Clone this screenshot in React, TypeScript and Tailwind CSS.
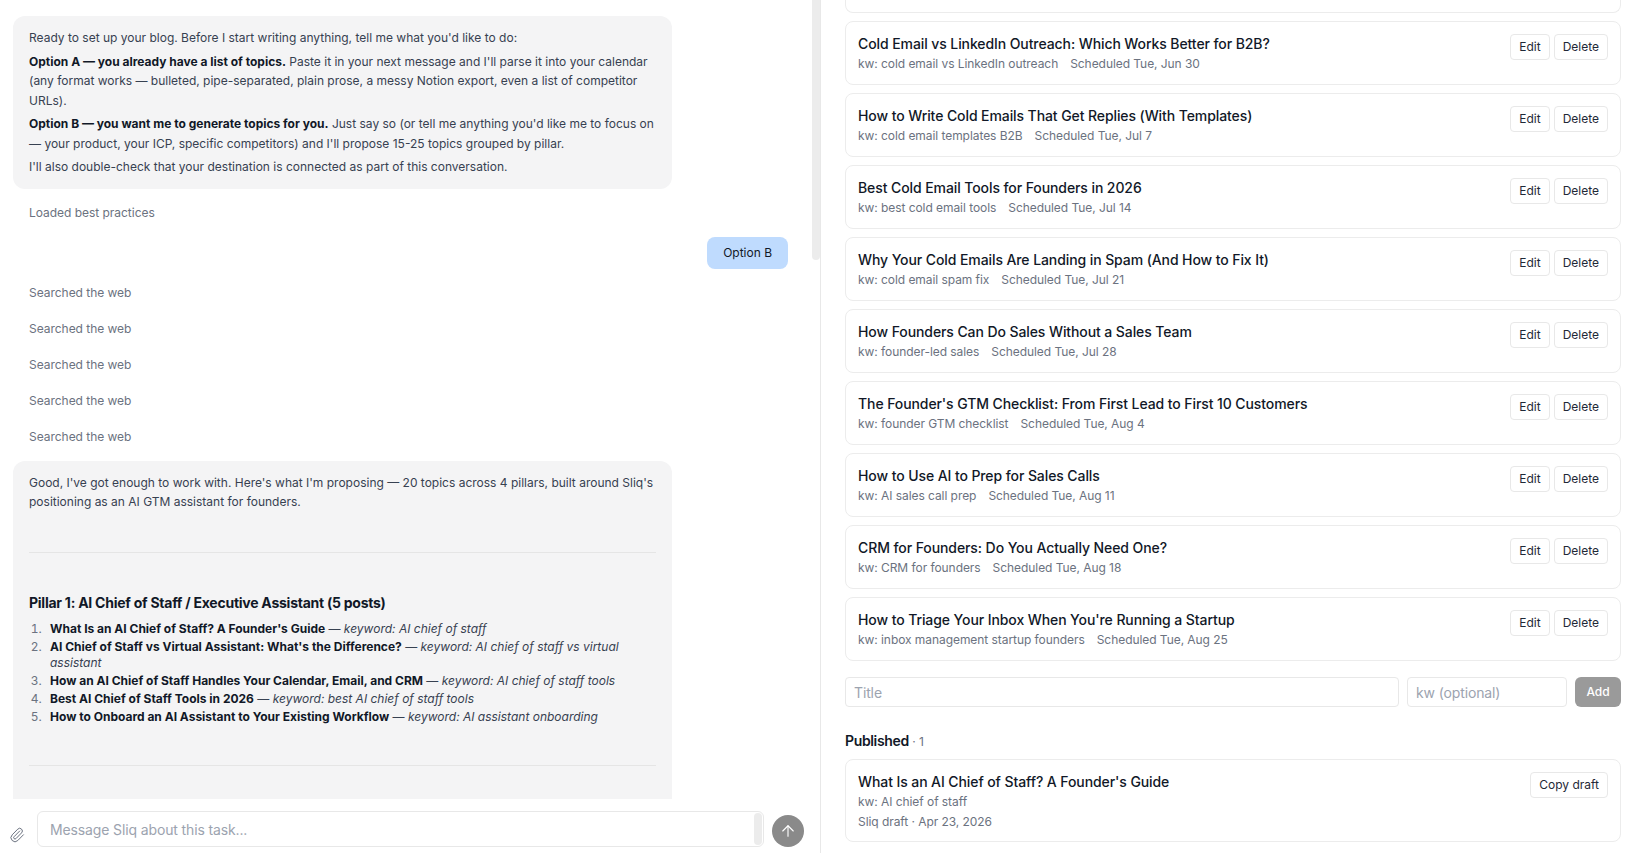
import { ArrowUp, Paperclip } from "lucide-react";

type Post = { title: string; kw: string; date: string };

const POSTS: Post[] = [
  { title: "Cold Email vs LinkedIn Outreach: Which Works Better for B2B?", kw: "cold email vs LinkedIn outreach", date: "Tue, Jun 30" },
  { title: "How to Write Cold Emails That Get Replies (With Templates)", kw: "cold email templates B2B", date: "Tue, Jul 7" },
  { title: "Best Cold Email Tools for Founders in 2026", kw: "best cold email tools", date: "Tue, Jul 14" },
  { title: "Why Your Cold Emails Are Landing in Spam (And How to Fix It)", kw: "cold email spam fix", date: "Tue, Jul 21" },
  { title: "How Founders Can Do Sales Without a Sales Team", kw: "founder-led sales", date: "Tue, Jul 28" },
  { title: "The Founder's GTM Checklist: From First Lead to First 10 Customers", kw: "founder GTM checklist", date: "Tue, Aug 4" },
  { title: "How to Use AI to Prep for Sales Calls", kw: "AI sales call prep", date: "Tue, Aug 11" },
  { title: "CRM for Founders: Do You Actually Need One?", kw: "CRM for founders", date: "Tue, Aug 18" },
  { title: "How to Triage Your Inbox When You're Running a Startup", kw: "inbox management startup founders", date: "Tue, Aug 25" },
];

const PILLAR_ONE = [
  { title: "What Is an AI Chief of Staff? A Founder's Guide", kw: "AI chief of staff" },
  { title: "AI Chief of Staff vs Virtual Assistant: What's the Difference?", kw: "AI chief of staff vs virtual assistant" },
  { title: "How an AI Chief of Staff Handles Your Calendar, Email, and CRM", kw: "AI chief of staff tools" },
  { title: "Best AI Chief of Staff Tools in 2026", kw: "best AI chief of staff tools" },
  { title: "How to Onboard an AI Assistant to Your Existing Workflow", kw: "AI assistant onboarding" },
];

function SmallButton({ children }: { children: React.ReactNode }) {
  return (
    <button className="h-[26px] rounded border border-[#e8e8e8] bg-white px-2 text-xs text-[#1f2937]">
      {children}
    </button>
  );
}

function ToolLine({ children, className = "" }: { children: React.ReactNode; className?: string }) {
  return <div className={`px-4 text-xs leading-[22px] tracking-[-0.03px] text-[#6b7280] ${className}`}>{children}</div>;
}

function Chat() {
  return (
    <div className="relative flex h-full w-[821px] shrink-0 flex-col border-r border-[#e8e8e8]">
      <div className="absolute top-0 right-0 h-[260px] w-2 rounded-b-md bg-[#ececec]" />

      {/* Messages */}
      <div className="min-h-0 flex-1 overflow-hidden pt-4 pr-8 pl-[13px]">
        <div className="flex flex-col gap-[14px]">
          <div className="w-[659px] rounded-xl bg-[#f4f4f5] px-4 py-3 text-xs leading-[19.5px] text-[#374151]">
            <p>Ready to set up your blog. Before I start writing anything, tell me what you'd like to do:</p>
            <p className="mt-1">
              <strong className="font-bold text-[#111827]">Option A — you already have a list of topics.</strong>{" "}
              Paste it in your next message and I'll parse it into your calendar (any format works — bulleted,
              pipe-separated, plain prose, a messy Notion export, even a list of competitor URLs).
            </p>
            <p className="mt-1">
              <strong className="font-bold text-[#111827]">Option B — you want me to generate topics for you.</strong>{" "}
              Just say so (or tell me anything you'd like me to focus on — your product, your ICP, specific competitors)
              and I'll propose 15-25 topics grouped by pillar.
            </p>
            <p className="mt-1">I'll also double-check that your destination is connected as part of this conversation.</p>
          </div>

          <ToolLine className="-mt-px">Loaded best practices</ToolLine>

          <div className="-mt-px -mb-[1px] flex justify-end">
            <div className="flex h-8 items-center rounded-lg bg-[#bfdbfe] px-4 text-xs text-[#111827]">Option B</div>
          </div>

          <ToolLine>Searched the web</ToolLine>
          <ToolLine>Searched the web</ToolLine>
          <ToolLine>Searched the web</ToolLine>
          <ToolLine>Searched the web</ToolLine>
          <ToolLine>Searched the web</ToolLine>

          <div className="-mt-px w-[659px] rounded-xl bg-[#f4f4f5] px-4 py-3 text-xs leading-[19.5px] text-[#374151]">
            <p>
              Good, I've got enough to work with. Here's what I'm proposing — 20 topics across 4 pillars, built around
              Sliq's positioning as an AI GTM assistant for founders.
            </p>
            <hr className="mt-10 mb-10 border-[#e5e5e5]" />
            <h3 className="text-sm leading-5 font-bold tracking-[-0.25px] text-[#111827]">
              Pillar 1: AI Chief of Staff / Executive Assistant (5 posts)
            </h3>
            <ol className="mt-2 list-decimal pl-4 text-xs leading-4 marker:text-[#6b7280]">
              {PILLAR_ONE.map((item) => (
                <li key={item.title} className="mb-[2px] pl-[5px]">
                  <strong className="font-bold text-[#111827]">{item.title}</strong> —{" "}
                  <em>keyword: {item.kw}</em>
                </li>
              ))}
            </ol>
            <hr className="mt-10 mb-10 border-[#e5e5e5]" />
          </div>
        </div>
      </div>

      {/* Composer */}
      <div className="flex shrink-0 items-end pt-3 pr-4 pb-[6px] pl-[9px]">
        <Paperclip className="mr-3 mb-1 shrink-0 text-[#6b7280]" size={16} strokeWidth={1.5} />
        <div className="relative flex-1">
          <input
            className="h-9 w-full rounded-md border border-[#e8e8e8] bg-white px-3 text-sm tracking-[-0.13px] text-[#111827] outline-none placeholder:text-[#9ca3af]"
            placeholder="Message Sliq about this task..."
          />
          <div className="absolute top-[2px] right-[2px] bottom-[2px] w-2 rounded-sm bg-[#ececec]" />
        </div>
        <button className="ml-2 flex size-8 shrink-0 items-center justify-center rounded-full bg-[#8a8a8a] text-white">
          <ArrowUp size={18} strokeWidth={1.5} />
        </button>
      </div>
    </div>
  );
}

function ScheduledCard({ post }: { post: Post }) {
  return (
    <div className="flex items-start justify-between rounded-lg border border-[#ececec] bg-white px-3 pt-3 pb-[11px]">
      <div>
        <div className="text-sm leading-5 font-medium tracking-[-0.09px] text-[#111827]">{post.title}</div>
        <div className="mt-px text-xs leading-[18px] tracking-[-0.06px] text-[#6b7280]">
          kw: {post.kw}
          <span className="ml-3">Scheduled {post.date}</span>
        </div>
      </div>
      <div className="flex gap-1">
        <SmallButton>Edit</SmallButton>
        <SmallButton>Delete</SmallButton>
      </div>
    </div>
  );
}

function Calendar() {
  return (
    <div className="flex h-full min-w-0 flex-1 flex-col overflow-hidden pr-3 pl-[24px]">
      <div className="h-[13px] shrink-0 rounded-b-lg border border-t-0 border-[#ececec]" />
      <div className="mt-2 flex flex-col gap-2">
        {POSTS.map((post) => (
          <ScheduledCard key={post.title} post={post} />
        ))}
      </div>

      <div className="mt-4 flex gap-2">
        <input
          className="h-[30px] min-w-0 flex-1 rounded border border-[#e8e8e8] px-2 text-sm tracking-[-0.13px] outline-none placeholder:text-[#9ca3af]"
          placeholder="Title"
        />
        <input
          className="h-[30px] w-40 rounded border border-[#e8e8e8] px-2 text-sm tracking-[-0.13px] outline-none placeholder:text-[#9ca3af]"
          placeholder="kw (optional)"
        />
        <button className="h-[30px] w-[46px] rounded-md bg-[#9a9a9a] text-xs font-medium text-white">Add</button>
      </div>

      <div className="mt-6 text-sm leading-5 text-[#111827]">
        <span className="font-semibold tracking-tight">Published</span>
        <span className="text-xs text-[#6b7280]"> · 1</span>
      </div>
      <div className="mt-2 flex items-start justify-between rounded-lg border border-[#ececec] bg-white px-3 pt-3 pb-[10px]">
        <div>
          <div className="text-sm leading-5 font-medium tracking-[-0.09px] text-[#111827]">What Is an AI Chief of Staff? A Founder's Guide</div>
          <div className="mt-px text-xs leading-[18px] tracking-[-0.06px] text-[#6b7280]">kw: AI chief of staff</div>
          <div className="mt-[2px] text-xs leading-[18px] tracking-[-0.06px] text-[#6b7280]">Sliq draft · Apr 23, 2026</div>
        </div>
        <SmallButton>Copy draft</SmallButton>
      </div>
    </div>
  );
}

export default function App() {
  return (
    <div className="flex h-[853px] w-full overflow-hidden bg-white font-['Inter',sans-serif]">
      <Chat />
      <Calendar />
    </div>
  );
}
